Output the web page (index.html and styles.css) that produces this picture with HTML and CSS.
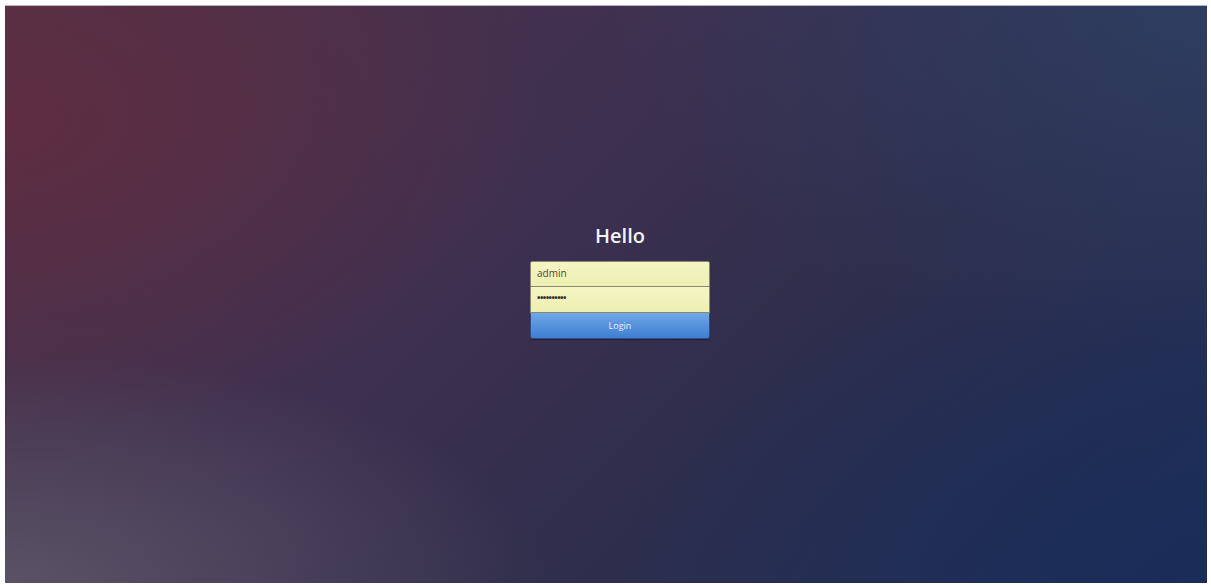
FILE: index.html
```html
<!DOCTYPE html>
<html lang="en">
<head>
<meta charset="utf-8">
<title>Hello</title>
<link rel="stylesheet" href="styles.css">
</head>
<body>
<main class="stage">
  <form class="login">
    <h1 class="login-title">Hello</h1>
    <div class="field">admin</div>
    <div class="field field-pass">••••••••••</div>
    <button type="button" class="login-btn">Login</button>
  </form>
</main>
</body>
</html>
```
FILE: styles.css
```css
html, body {
  margin: 0;
  height: 100%;
}
body {
  background: #ffffff;
  padding: 5px 4px 2px 5px;
  box-sizing: border-box;
  font-family: "Open Sans", "DejaVu Sans", sans-serif;
}
.stage {
  height: 100%;
  border-top: 1px solid #b9b4bd;
  box-sizing: border-box;
  display: flex;
  justify-content: center;
  align-items: flex-start;
  background:
    radial-gradient(ellipse 45% 40% at 0% 100%, rgba(92, 86, 104, 0.9), rgba(92, 86, 104, 0) 100%),
    radial-gradient(ellipse 45% 55% at 0% 20%, rgba(98, 44, 64, 0.85), rgba(98, 44, 64, 0) 100%),
    radial-gradient(ellipse 50% 60% at 100% 100%, rgba(24, 44, 88, 0.9), rgba(24, 44, 88, 0) 100%),
    radial-gradient(ellipse 50% 60% at 100% 0%, rgba(46, 64, 100, 0.85), rgba(46, 64, 100, 0) 100%),
    linear-gradient(135deg, #4f3248 0%, #3e3050 40%, #2e2e4c 65%, #22305a 100%);
}
.login {
  margin-top: 216px;
  margin-left: 28px;
  width: 180px;
  display: flex;
  flex-direction: column;
}
.login-title {
  margin: 0 0 11px;
  text-align: center;
  color: #f4f2f6;
  font-size: 20px;
  font-weight: 600;
  line-height: 28px;
}
.field {
  height: 26px;
  box-sizing: border-box;
  background: linear-gradient(#f4f5c2, #eeefb3);
  border: 1px solid #8a8870;
  border-radius: 2px 2px 0 0;
  padding: 0 6px;
  font-size: 10px;
  line-height: 22px;
  color: #4a4a3a;
}
.field-pass {
  border-top: none;
  border-radius: 0;
  letter-spacing: -0.5px;
  font-size: 9px;
  font-weight: 700;
  color: #2e2e2a;
}
.login-btn {
  height: 26px;
  border: 1px solid #2e4f8a;
  border-top: none;
  border-radius: 0 0 3px 3px;
  background: linear-gradient(#6ea8e6, #3f7dd2);
  color: #e8f0fa;
  font-family: "Open Sans", "DejaVu Sans", sans-serif;
  font-size: 9px;
  padding: 0;
  box-shadow: 0 1px 1px rgba(0, 0, 0, 0.35);
}
```
